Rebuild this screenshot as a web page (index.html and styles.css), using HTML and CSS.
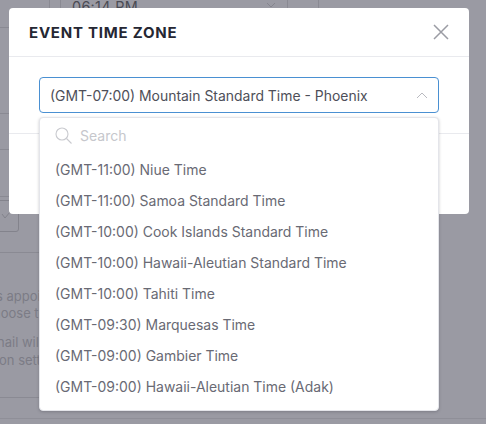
FILE: index.html
```html
<!DOCTYPE html>
<html lang="en">
<head>
<meta charset="utf-8">
<title>Event Time Zone</title>
<link rel="stylesheet" href="styles.css">
</head>
<body>
<div class="backdrop">
  <div class="bg-time">06:14 PM</div>
  <svg class="bg-chev" viewBox="0 0 10 6" width="10" height="6"><path d="M1 1l4 4 4-4"/></svg>
  <div class="bg-v bg-v1"></div>
  <div class="bg-v bg-v2"></div>
  <div class="bg-v bg-v3"></div>
  <div class="bg-v bg-v4"></div>
  <div class="bg-h bg-h1"></div>
  <div class="bg-h bg-h2"></div>
  <div class="bg-h bg-h3"></div>
  <div class="bg-h bg-h4"></div>
  <div class="bg-h bg-h5"></div>
  <div class="bg-h bg-h6"></div>
  <div class="bg-h bg-h7"></div>
  <div class="bg-box">
    <svg class="bg-check" viewBox="0 0 10 8" width="10" height="8"><path d="M1 3l3 4 5-6"/></svg>
  </div>
  <p class="bg-text bg-t1">s appoi</p>
  <p class="bg-text bg-t2">hoose t</p>
  <p class="bg-text bg-t3">nail will</p>
  <p class="bg-text bg-t4">on sett</p>
</div>
<section class="modal">
  <header class="modal-head">
    <h2 class="modal-title">EVENT TIME ZONE</h2>
    <svg class="close" viewBox="0 0 16 16" width="16" height="16"><path d="M1 1l14 14M15 1L1 15"/></svg>
  </header>
  <div class="modal-body">
    <div class="select">
      <span>(GMT-07:00) Mountain Standard Time - Phoenix</span>
      <svg class="chev" viewBox="0 0 12 7" width="12" height="7"><path d="M1 6l5-5 5 5"/></svg>
    </div>
  </div>
  <div class="modal-foot"></div>
</section>
<div class="dropdown">
  <div class="search">
    <svg class="search-icon" viewBox="0 0 17 17" width="17" height="17"><circle cx="7" cy="7" r="6"/><path d="M11.5 11.5l5 5"/></svg>
    <span>Search</span>
  </div>
  <ul class="options">
    <li>(GMT-11:00) Niue Time</li>
    <li>(GMT-11:00) Samoa Standard Time</li>
    <li>(GMT-10:00) Cook Islands Standard Time</li>
    <li>(GMT-10:00) Hawaii-Aleutian Standard Time</li>
    <li>(GMT-10:00) Tahiti Time</li>
    <li>(GMT-09:30) Marquesas Time</li>
    <li>(GMT-09:00) Gambier Time</li>
    <li>(GMT-09:00) Hawaii-Aleutian Time (Adak)</li>
  </ul>
</div>
</body>
</html>
```
FILE: styles.css
```css
* { box-sizing: border-box; }
html, body { margin: 0; height: 100%; overflow: hidden; }
body { position: relative; width: 486px; height: 424px; background: #9a9aa3; font-family: Inter, "Liberation Sans", sans-serif; color: #54555f; }
.backdrop { position: absolute; inset: 0; overflow: hidden; }
.bg-time { position: absolute; left: 72px; top: -2px; font-size: 14.4px; letter-spacing: .3px; color: #4a4b54; }
.bg-chev { position: absolute; left: 266px; top: 2px; fill: none; stroke: #85858e; stroke-width: 1; }
.bg-v, .bg-h { position: absolute; background: #8a8a93; }
.bg-v { top: 0; width: 1px; height: 8px; }
.bg-v1 { left: 49px; }
.bg-v2 { left: 60px; }
.bg-v3 { left: 287px; }
.bg-v4 { left: 318px; }
.bg-h { left: 0; height: 1px; width: 9px; }
.bg-h1 { top: 27px; }
.bg-h2 { top: 113px; }
.bg-h3 { top: 149px; }
.bg-h4 { top: 196px; }
.bg-h5 { top: 252px; width: 40px; }
.bg-h6 { top: 397px; width: 40px; }
.bg-h7 { top: 418px; width: 486px; background: #8f8f98; }
.bg-box { position: absolute; left: -10px; top: 200px; width: 29px; height: 32px; border: 1px solid #83838c; border-radius: 3px; }
.bg-check { position: absolute; left: 10px; top: 10px; fill: none; stroke: #83838c; stroke-width: 1; }
.bg-text { position: absolute; margin: 0; white-space: nowrap; font-size: 13px; line-height: 18px; color: #7c7c86; }
.bg-t1 { top: 287px; left: -4px; }
.bg-t2 { top: 304px; left: -7px; }
.bg-t3 { top: 333px; left: -3px; }
.bg-t4 { top: 351px; left: -1px; }
.modal { position: absolute; left: 9px; top: 8px; width: 460px; height: 206px; background: #fff; border-radius: 4px; }
.modal-head { display: flex; align-items: center; justify-content: space-between; height: 49px; padding: 0 20px; border-bottom: 1px solid #e9eaee; }
.modal-title { margin: 0; font-size: 15px; font-weight: 700; letter-spacing: .77px; color: #252733; }
.close { fill: none; stroke: #9b9ca4; stroke-width: 1.5; }
.modal-body { height: 77px; padding: 20px 30px 0; border-bottom: 1px solid #e9eaee; }
.select { display: flex; align-items: center; justify-content: space-between; height: 36px; padding: 0 10px 0 10px; border: 1px solid #4a90d2; border-radius: 4px; font-size: 13.95px; color: #4e4f59; }
.chev { fill: none; stroke: #b9bac0; stroke-width: 1; }
.dropdown { position: absolute; left: 39px; top: 117px; width: 400px; height: 294px; background: #fff; border: 1px solid #e4e5ea; border-radius: 4px; box-shadow: 0 1px 3px rgba(40,40,50,.25); }
.search { display: flex; align-items: center; gap: 8px; height: 35px; padding-left: 15px; font-size: 14px; color: #c6c7cc; }
.search-icon { fill: none; stroke: #c9cacf; stroke-width: 1.1; }
.options { list-style: none; margin: 1px 0 0; padding: 0; }
.options li { display: flex; align-items: center; height: 31px; padding-left: 15px; font-size: 13.98px; color: #696a74; }
```
